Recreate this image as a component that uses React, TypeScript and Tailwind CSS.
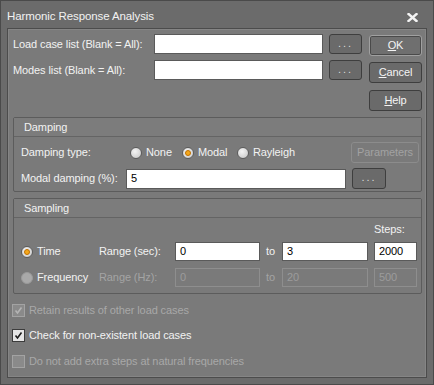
import React from 'react'

const font = "font-['Liberation_Sans','Noto_Sans',sans-serif]"

function Btn({ children, w, h = 'h-[21px]', def, disabled, className = '' }: {
  children: React.ReactNode, w: string, h?: string, def?: boolean, disabled?: boolean, className?: string
}) {
  const look = disabled
    ? 'border-[#8c8c8c] bg-[#7a7a7a] text-[#a2a2a2]'
    : def
      ? 'border-[#a0a0a0] bg-[#6f6f6f] text-[#f4f4f4] shadow-[inset_0_0_0_1px_#4a4a4a]'
      : 'border-[#3e3e3e] bg-[#6a6a6a] text-[#f4f4f4]'
  return (
    <div className={`${w} ${h} ${look} ${className} flex shrink-0 items-center justify-center whitespace-nowrap rounded-[3px] border`}>
      {children}
    </div>
  )
}

function Dots({ w = 'w-[33px]', h = 'h-[20px]', className = '' }: { w?: string, h?: string, className?: string }) {
  return (
    <Btn w={w} h={h} className={className}>
      <span className="pb-[2px] tracking-[2px] text-[#dcdcdc]">...</span>
    </Btn>
  )
}

function Field({ w, value = '', disabled, className = '' }: { w: string, value?: string, disabled?: boolean, className?: string }) {
  return (
    <div className={`${w} ${className} flex h-[19px] shrink-0 items-center border pl-[4px] ${disabled ? 'border-[#8e8e8e] bg-[#7a7a7a] text-[#9c9c9c]' : 'border-[#5a5a5a] bg-white text-black'}`}>
      {value}
    </div>
  )
}

function Radio({ on, disabled }: { on?: boolean, disabled?: boolean }) {
  return (
    <span className={`flex h-[12px] w-[12px] shrink-0 items-center justify-center rounded-full border ${disabled ? 'border-[#9a9a9a] bg-[#a9a9a9]' : 'border-[#5c5c5c] bg-[radial-gradient(circle_at_40%_35%,#f4f4f4,#c4c4c4)]'}`}>
      {on && <span className="h-[6px] w-[6px] rounded-full border border-[#c07000] bg-[#f4a81c]" />}
    </span>
  )
}

function Check({ on, disabled }: { on?: boolean, disabled?: boolean }) {
  return (
    <span className={`flex h-[13px] w-[13px] shrink-0 items-center justify-center border ${disabled ? 'border-[#a3a3a3] bg-[#8a8a8a]' : 'border-[#3c3c3c] bg-[#e6e6e6]'}`}>
      {on && (
        <svg width="9" height="9" viewBox="0 0 9 9">
          <path d="M1.5 4.5 L3.5 7 L7.5 1.5" fill="none" stroke={disabled ? '#b4b4b4' : '#1c1c1c'} strokeWidth="1.6" />
        </svg>
      )}
    </span>
  )
}

function Group({ title, h, children, className = '' }: { title: string, h: string, children: React.ReactNode, className?: string }) {
  return (
    <div className={`${h} ${className} ml-[5px] w-[409px] rounded-[2px] border border-[#5c5c5c]`}>
      <div className="flex h-[19px] items-center border-b border-[#646464] bg-[#7c7c7c] pl-[10px]">{title}</div>
      {children}
    </div>
  )
}

export default function App() {
  return (
    <div className={`${font} h-[385px] w-[434px] whitespace-nowrap border border-[#4a4a4a] bg-[#6b6b6b] text-[11px] tracking-[-0.1px] text-[#f2f2f2]`}>
      <div className="flex h-[27px] items-center justify-between pl-[6px] pr-[15px] pt-[5px]">
        <span className="text-[11.5px]">Harmonic Response Analysis</span>
        <svg width="11" height="9" viewBox="0 0 11 9">
          <path d="M1.5 1 L9.5 8 M9.5 1 L1.5 8" stroke="#f4f4f4" strokeWidth="2.4" strokeLinecap="square" />
        </svg>
      </div>

      <div className="ml-[6px] h-[350px] w-[420px] border border-[#4c4c4c] bg-[#7a7a7a] shadow-[inset_0_0_0_1px_#858585]">
        <div className="flex items-start pl-[5px] pt-[5px]">
          <div>
            <div className="flex h-[20px] items-center">
              <span className="w-[141px]">Load case list (Blank = All):</span>
              <Field w="w-[169px]" className="h-[20px]" />
              <Dots className="ml-[6px]" />
            </div>
            <div className="mt-[6px] flex h-[20px] items-center">
              <span className="w-[141px]">Modes list (Blank = All):</span>
              <Field w="w-[169px]" className="h-[20px]" />
              <Dots className="ml-[6px]" />
            </div>
          </div>
          <div className="ml-[7px] mt-[1px] flex flex-col">
            <Btn w="w-[53px]" def><span><span className="underline">O</span>K</span></Btn>
            <Btn w="w-[53px]" className="mt-[6px]"><span><span className="underline">C</span>ancel</span></Btn>
            <Btn w="w-[53px]" className="mt-[7px]"><span><span className="underline">H</span>elp</span></Btn>
          </div>
        </div>

        <Group title="Damping" h="h-[75px]" className="mt-[6px]">
          <div className="mt-[5px] flex h-[21px] items-center pl-[7px]">
            <span className="w-[109px]">Damping type:</span>
            <span className="flex w-[52px] items-center gap-[4px]"><Radio />None</span>
            <span className="flex w-[55px] items-center gap-[4px]"><Radio on />Modal</span>
            <span className="flex items-center gap-[4px]"><Radio />Rayleigh</span>
            <Btn w="w-[68px]" disabled className="ml-auto mr-[2px]">Parameters</Btn>
          </div>
          <div className="mt-[5px] flex h-[21px] items-center pl-[7px]">
            <span className="w-[105px]">Modal damping (%):</span>
            <Field w="w-[220px]" value="5" className="h-[20px]" />
            <Dots w="w-[34px]" h="h-[21px]" className="ml-[6px]" />
          </div>
        </Group>

        <Group title="Sampling" h="h-[96px]" className="mt-[6px]">
          <div className="mt-[4px] flex h-[15px] items-center justify-end pr-[4px]">
            <span className="w-[43px]">Steps:</span>
          </div>
          <div className="mt-[5px] flex h-[19px] items-center pl-[7px]">
            <span className="flex w-[78px] items-center gap-[4px]"><Radio on />Time</span>
            <span className="w-[76px]">Range (sec):</span>
            <Field w="w-[85px]" value="0" />
            <span className="w-[22px] pl-[6px]">to</span>
            <Field w="w-[86px]" value="3" />
            <Field w="w-[43px]" value="2000" className="ml-[6px]" />
          </div>
          <div className="mt-[7px] flex h-[19px] items-center pl-[7px]">
            <span className="flex w-[78px] items-center gap-[4px]"><Radio disabled />Frequency</span>
            <span className="w-[76px] text-[#a4a4a4]">Range (Hz):</span>
            <Field w="w-[85px]" value="0" disabled />
            <span className="w-[22px] pl-[6px] text-[#a4a4a4]">to</span>
            <Field w="w-[86px]" value="20" disabled />
            <Field w="w-[43px]" value="500" disabled className="ml-[6px]" />
          </div>
        </Group>

        <div className="pl-[4px]">
          <div className="mt-[8px] flex h-[16px] items-center gap-[4px] text-[#a8a8a8]">
            <Check on disabled />Retain results of other load cases
          </div>
          <div className="mt-[9px] flex h-[16px] items-center gap-[4px]">
            <Check on />Check for non-existent load cases
          </div>
          <div className="mt-[10px] flex h-[16px] items-center gap-[4px] text-[#a8a8a8]">
            <Check disabled />Do not add extra steps at natural frequencies
          </div>
        </div>
      </div>
    </div>
  )
}
